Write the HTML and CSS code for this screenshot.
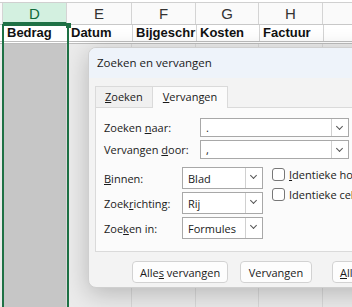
FILE: index.html
```html
<!DOCTYPE html>
<html lang="nl">

<head>
  <meta charset="UTF-8" />
  <meta name="viewport" content="width=device-width, initial-scale=1.0" />
  <title>Zoeken en vervangen</title>
  <link rel="stylesheet" href="styles.css">
</head>

<body>
  <div class="sheet">
    <div class="top-strip"></div>

    <div class="row col-heads">
      <div class="cell c-stub"></div>
      <div class="cell c-d active">D</div>
      <div class="cell c-e">E</div>
      <div class="cell c-f">F</div>
      <div class="cell c-g">G</div>
      <div class="cell c-h">H</div>
      <div class="cell c-i"></div>
    </div>

    <div class="row data-row">
      <div class="cell c-stub"></div>
      <div class="cell c-d">Bedrag</div>
      <div class="cell c-e">Datum</div>
      <div class="cell c-f">Bijgeschr</div>
      <div class="cell c-g">Kosten</div>
      <div class="cell c-h">Factuur</div>
      <div class="cell c-i"></div>
    </div>

    <div class="row body-row">
      <div class="cell c-stub"></div>
      <div class="cell c-d selected"></div>
      <div class="cell c-e"></div>
      <div class="cell c-f"></div>
      <div class="cell c-g"></div>
      <div class="cell c-h"></div>
      <div class="cell c-i"></div>
    </div>

    <div class="selection"></div>
  </div>

  <div class="dialog">
    <div class="title">Zoeken en vervangen</div>

    <div class="tabs">
      <div class="tab"><u>Z</u>oeken</div>
      <div class="tab current"><u>V</u>ervangen</div>
    </div>

    <div class="panel">
      <div class="field">
        <label>Zoeken <u>n</u>aar:</label>
        <div class="combo wide"><span>.</span><i class="arrow"></i></div>
      </div>
      <div class="field">
        <label>Vervangen <u>d</u>oor:</label>
        <div class="combo wide"><span>,</span><i class="arrow"></i></div>
      </div>

      <div class="options">
        <div class="selects">
          <div class="field">
            <label><u>B</u>innen:</label>
            <div class="combo small"><span>Blad</span><i class="arrow"></i></div>
          </div>
          <div class="field">
            <label>Zoek<u>r</u>ichting:</label>
            <div class="combo small"><span>Rij</span><i class="arrow"></i></div>
          </div>
          <div class="field">
            <label>Zoe<u>k</u>en in:</label>
            <div class="combo small"><span>Formules</span><i class="arrow"></i></div>
          </div>
        </div>
        <div class="checks">
          <div class="check"><span class="box"></span><u>I</u>dentieke ho</div>
          <div class="check"><span class="box"></span>Identieke cel</div>
        </div>
      </div>
    </div>

    <div class="buttons">
      <button class="first">Alle<u>s</u> vervangen</button>
      <button>Vervan<u>g</u>en</button>
      <button class="last"><u>A</u>ll</button>
    </div>
  </div>
</body>

</html>
```

FILE: styles.css
```css
* {
  margin: 0;
  padding: 0;
  box-sizing: border-box;
}

body {
  width: 352px;
  height: 307px;
  overflow: hidden;
  position: relative;
  background: #ebebeb;
  font-family: 'Liberation Sans', Arial, sans-serif;
  color: #222;
}

/* Spreadsheet behind the dialog */
.sheet {
  position: relative;
  height: 307px;
}

.top-strip {
  height: 3px;
  background: #fff;
  border-bottom: 1px solid #d0d0d0;
}

.row {
  display: flex;
}

.cell {
  flex: none;
  border-right: 1px solid #d4d4d4;
  overflow: hidden;
  white-space: nowrap;
}

.c-stub { width: 3px; }
.c-d { width: 64px; }
.c-e { width: 65px; }
.c-f { width: 64px; }
.c-g { width: 63px; }
.c-h { width: 64px; }
.c-i { flex: 1; border-right: none; }

.col-heads {
  height: 22px;
  background: #fafafa;
  border-bottom: 1px solid #c8c8c8;
}

.col-heads .cell {
  text-align: center;
  font-size: 15px;
  line-height: 21px;
  color: #333;
}

.col-heads .active {
  background: #d3f0e0;
  color: #0f6b3a;
  border-bottom: 2px solid #1e7145;
}

.data-row {
  height: 19px;
  background: #fff;
  border-bottom: 3px double #bdbdbd;
}

.data-row .cell {
  font-weight: bold;
  font-size: 13px;
  line-height: 16px;
  padding-left: 3px;
  color: #111;
}

.body-row {
  height: 270px;
}

.body-row .cell {
  border-right-color: #d8d8d8;
}

.body-row .selected {
  background: #c6c6c6;
}

.selection {
  position: absolute;
  left: 2px;
  top: 24px;
  width: 67px;
  height: 290px;
  border: 2px solid #1e7145;
}

.selection::after {
  content: "";
  position: absolute;
  right: -4px;
  top: -3px;
  width: 5px;
  height: 5px;
  background: #1e7145;
}

/* Dialog */
.dialog {
  position: absolute;
  left: 88px;
  top: 47px;
  width: 300px;
  height: 241px;
  background: #f3f3f3;
  border: 1px solid #cfcfcf;
  border-radius: 8px;
  box-shadow: 0 6px 24px rgba(0, 0, 0, 0.22);
  font-family: 'Open Sans', 'Noto Sans', sans-serif;
  font-size: 11px;
  color: #1a1a1a;
  overflow: hidden;
}

.title {
  height: 30px;
  background: #eef3fa;
  padding-left: 8px;
  font-size: 11.5px;
  line-height: 29px;
}

.tabs {
  display: flex;
  align-items: flex-end;
  margin: 7px 0 0 6px;
  height: 22px;
}

.tab {
  height: 21px;
  padding: 0 9px;
  line-height: 20px;
  background: #f0f0f0;
  border: 1px solid #dadada;
  border-bottom: none;
}

.tab.current {
  height: 22px;
  background: #fbfbfb;
  padding: 0 10px;
  border-left: none;
  margin-bottom: -1px;
  position: relative;
}

.panel {
  margin-left: 6px;
  height: 145px;
  background: #fbfbfb;
  border: 1px solid #dadada;
  padding: 10px 0 0 8px;
}

.field {
  display: flex;
  align-items: center;
  margin-bottom: 3px;
}

.field label {
  width: 96px;
  flex: none;
}

.combo {
  display: flex;
  height: 19px;
  background: #fff;
  border: 1px solid #a8a8a8;
  padding-left: 5px;
  align-items: center;
}

.combo span {
  flex: 1;
}

.combo.wide {
  width: 149px;
}

.combo.small {
  width: 81px;
  height: 22px;
}

.arrow {
  width: 17px;
  height: 100%;
  border-left: 1px solid #d0d0d0;
  position: relative;
}

.arrow::after {
  content: "";
  position: absolute;
  left: 5px;
  top: 5px;
  width: 4px;
  height: 4px;
  border-right: 1px solid #555;
  border-bottom: 1px solid #555;
  transform: rotate(45deg);
}

.options {
  display: flex;
  margin-top: 8px;
}

.selects .field {
  margin-bottom: 3px;
}

.selects label {
  width: 78px;
}

.checks {
  margin-left: 9px;
  white-space: nowrap;
}

.check {
  display: flex;
  align-items: center;
  height: 14px;
  margin: 0 0 6px;
}

.box {
  width: 13px;
  height: 13px;
  border: 1px solid #777;
  border-radius: 3px;
  background: #fff;
  margin-right: 4px;
}

.buttons {
  display: flex;
  gap: 12px;
  margin: 9px 0 0 43px;
}

.buttons button {
  flex: none;
  height: 22px;
  min-width: 72px;
  padding: 0 7px;
  background: #fdfdfd;
  border: 1px solid #d2d2d2;
  border-radius: 4px;
  font-family: inherit;
  font-size: 11px;
  color: #1a1a1a;
  white-space: nowrap;
}

.buttons .first {
  width: 96px;
}

.buttons .last {
  margin-left: 8px;
  text-align: left;
}
```
